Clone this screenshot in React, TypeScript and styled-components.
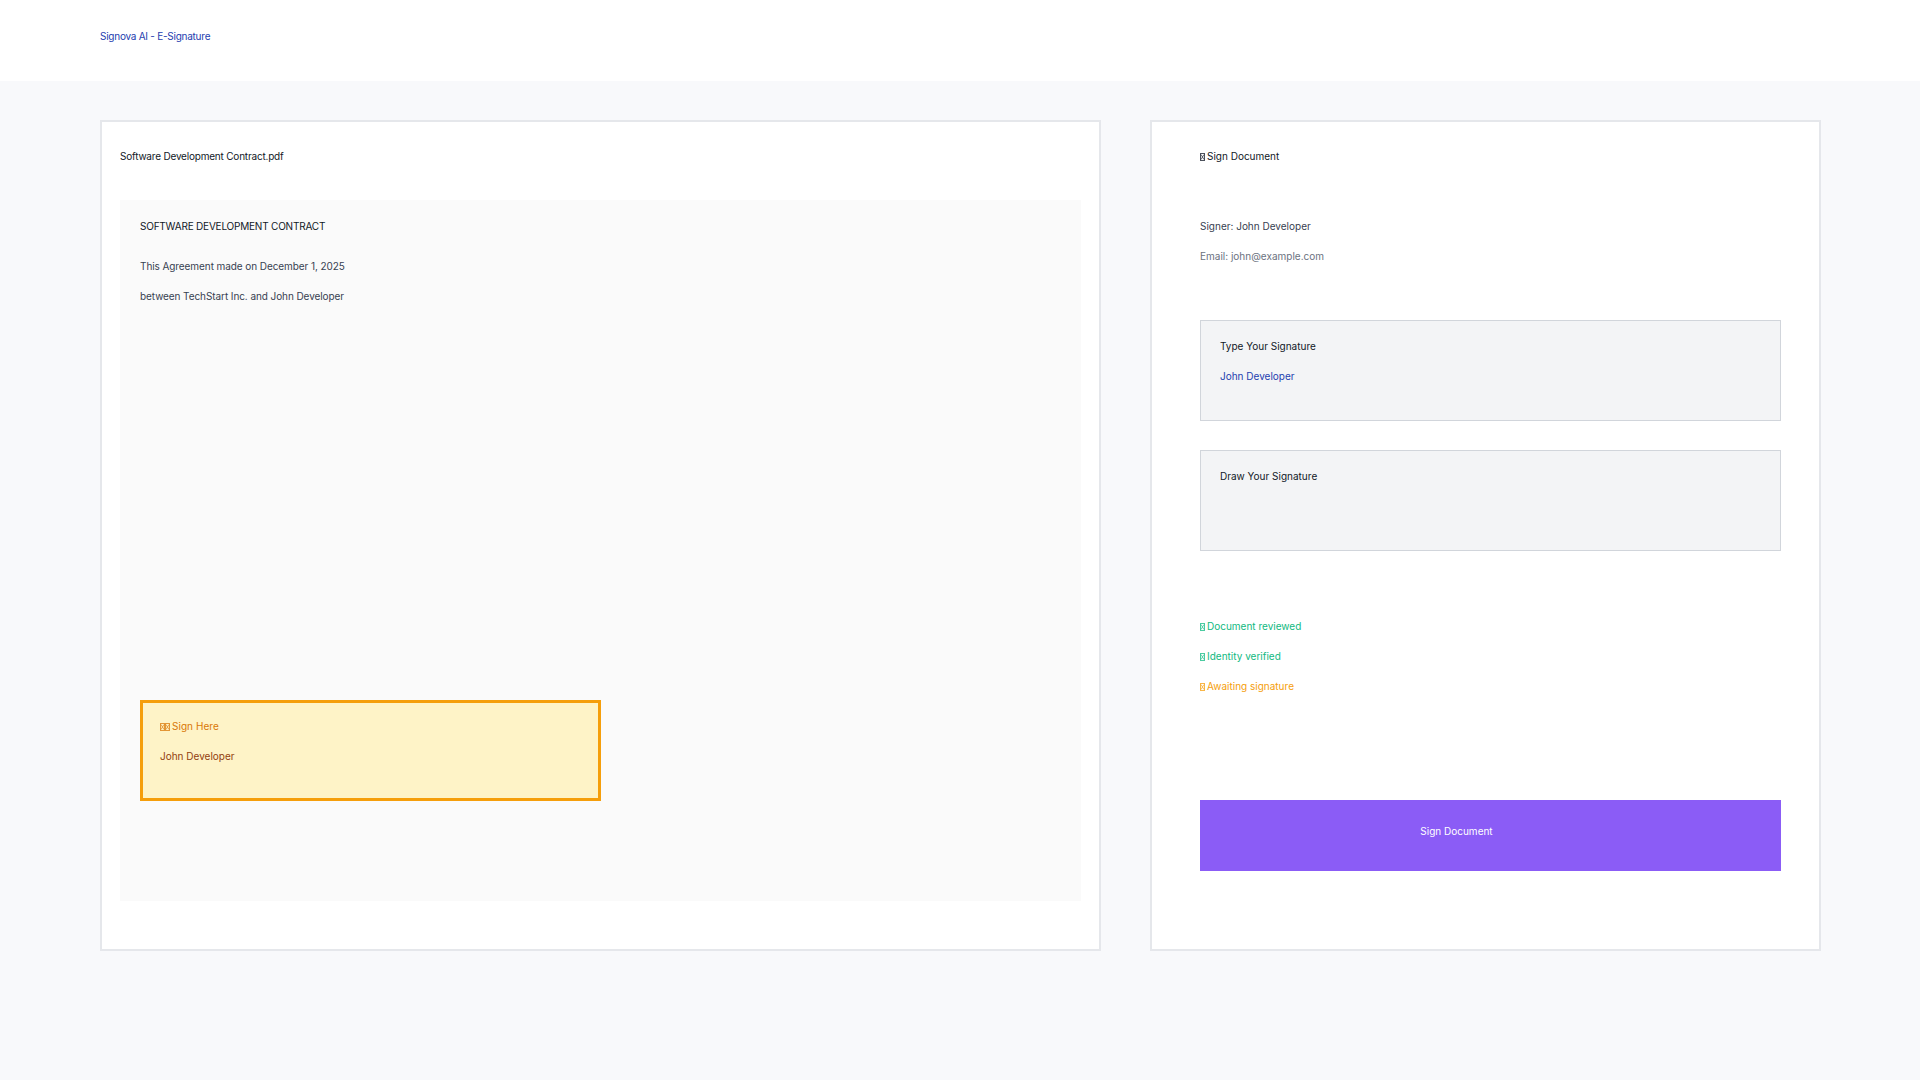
import styled, { createGlobalStyle } from "styled-components"

const GlobalStyle = createGlobalStyle`
  html, body {
    margin: 0;
    padding: 0;
    background: #f8f9fb;
  }
  body {
    font-family: "Inter", "Liberation Sans", sans-serif;
    font-size: 10px;
    line-height: 20px;
  }
  * {
    box-sizing: border-box;
  }
`

const Page = styled.div`
  width: 1920px;
  height: 1080px;
  overflow: hidden;
`

const Header = styled.header`
  height: 81px;
  background: #fff;
  padding: 26px 100px 0;
  color: #1e40af;
  letter-spacing: -0.25px;
`

const Main = styled.main`
  display: flex;
  gap: 49px;
  padding: 39px 0 0 100px;
`

const Card = styled.section<{ $width: number; $pad: number }>`
  flex: none;
  width: ${(props) => props.$width}px;
  height: 831px;
  background: #fff;
  border: 2px solid #e5e7eb;
  padding: 24px 0 0 ${(props) => props.$pad}px;
`

const Title = styled.div<{ $tight?: boolean }>`
  color: #111827;
  letter-spacing: ${(props) => (props.$tight ? "-0.2px" : "0")};
`

const DocPanel = styled.div`
  width: 961px;
  height: 701px;
  margin-top: 34px;
  padding: 16px 0 0 20px;
  background: #fafafa;
`

const DocHeading = styled.div`
  color: #111827;
  margin-bottom: 20px;
  letter-spacing: -0.2px;
`

const DocLine = styled.div`
  color: #374151;
  margin-bottom: 10px;
  letter-spacing: -0.08px;
`

const SignBox = styled.div`
  width: 461px;
  height: 101px;
  margin-top: 394px;
  padding: 13px 17px 0;
  background: #fef3c7;
  border: 3px solid #f59e0b;
`

const SignLabel = styled.div`
  color: #d97706;
  margin-bottom: 10px;
  letter-spacing: 0.05px;
`

const SignName = styled.div`
  color: #92400e;
`

const SignerInfo = styled.div`
  margin-top: 50px;
  margin-bottom: 54px;
`

const InfoLine = styled.div<{ $muted?: boolean }>`
  color: ${(props) => (props.$muted ? "#6b7280" : "#374151")};
  margin-bottom: 10px;

  &:last-child {
    margin-bottom: 0;
  }
`

const FieldBox = styled.div`
  width: 581px;
  height: 101px;
  margin-bottom: 29px;
  padding: 15px 19px 0;
  background: #f3f4f6;
  border: 1px solid #d1d5db;

  &:last-of-type {
    margin-bottom: 0;
  }
`

const FieldLabel = styled.div`
  color: #111827;
  margin-bottom: 10px;
`

const FieldValue = styled.div`
  color: #1e40af;
`

const StatusList = styled.div`
  margin-top: 65px;
  display: flex;
  flex-direction: column;
  gap: 10px;
`

const StatusItem = styled.div<{ $color: string }>`
  color: ${(props) => props.$color};
`

const SignButton = styled.button`
  display: block;
  width: 581px;
  height: 71px;
  margin-top: 104px;
  padding: 0 68px 9px 0;
  border: none;
  background: #8b5cf6;
  color: #fff;
  font: inherit;
  text-align: center;
`

const TofuIcon = styled.svg`
  width: 5px;
  height: 8px;
  vertical-align: -1px;
`

const TofuGap = styled.span`
  display: inline-block;
  width: 2px;
`

// the missing-glyph box the reference shows where its emoji did not render
function Tofu({ count = 1 }: { count?: number }) {
  return (
    <>
      {Array.from({ length: count }, (_, i) => (
        <TofuIcon key={i} viewBox="0 0 5 8" aria-hidden="true">
          <rect x="0.5" y="0.5" width="4" height="7" fill="none" stroke="currentColor" strokeWidth="1" opacity="0.75" />
          <path d="M1 1.5 4 6.5M4 1.5 1 6.5" fill="none" stroke="currentColor" strokeWidth="0.8" opacity="0.8" />
        </TofuIcon>
      ))}
      <TofuGap />
    </>
  )
}

export default function App() {
  return (
    <Page>
      <GlobalStyle />
      <Header>Signova AI - E-Signature</Header>
      <Main>
        <Card $width={1001} $pad={18}>
          <Title $tight>Software Development Contract.pdf</Title>
          <DocPanel>
            <DocHeading>SOFTWARE DEVELOPMENT CONTRACT</DocHeading>
            <DocLine>This Agreement made on December 1, 2025</DocLine>
            <DocLine>between TechStart Inc. and John Developer</DocLine>
            <SignBox>
              <SignLabel>
                <Tofu count={2} />
                Sign Here
              </SignLabel>
              <SignName>John Developer</SignName>
            </SignBox>
          </DocPanel>
        </Card>
        <Card $width={671} $pad={48}>
          <Title>
            <Tofu />
            Sign Document
          </Title>
          <SignerInfo>
            <InfoLine>Signer: John Developer</InfoLine>
            <InfoLine $muted>Email: john@example.com</InfoLine>
          </SignerInfo>
          <FieldBox>
            <FieldLabel>Type Your Signature</FieldLabel>
            <FieldValue>John Developer</FieldValue>
          </FieldBox>
          <FieldBox>
            <FieldLabel>Draw Your Signature</FieldLabel>
          </FieldBox>
          <StatusList>
            <StatusItem $color="#10b981">
              <Tofu />
              Document reviewed
            </StatusItem>
            <StatusItem $color="#10b981">
              <Tofu />
              Identity verified
            </StatusItem>
            <StatusItem $color="#f59e0b">
              <Tofu />
              Awaiting signature
            </StatusItem>
          </StatusList>
          <SignButton>Sign Document</SignButton>
        </Card>
      </Main>
    </Page>
  )
}
